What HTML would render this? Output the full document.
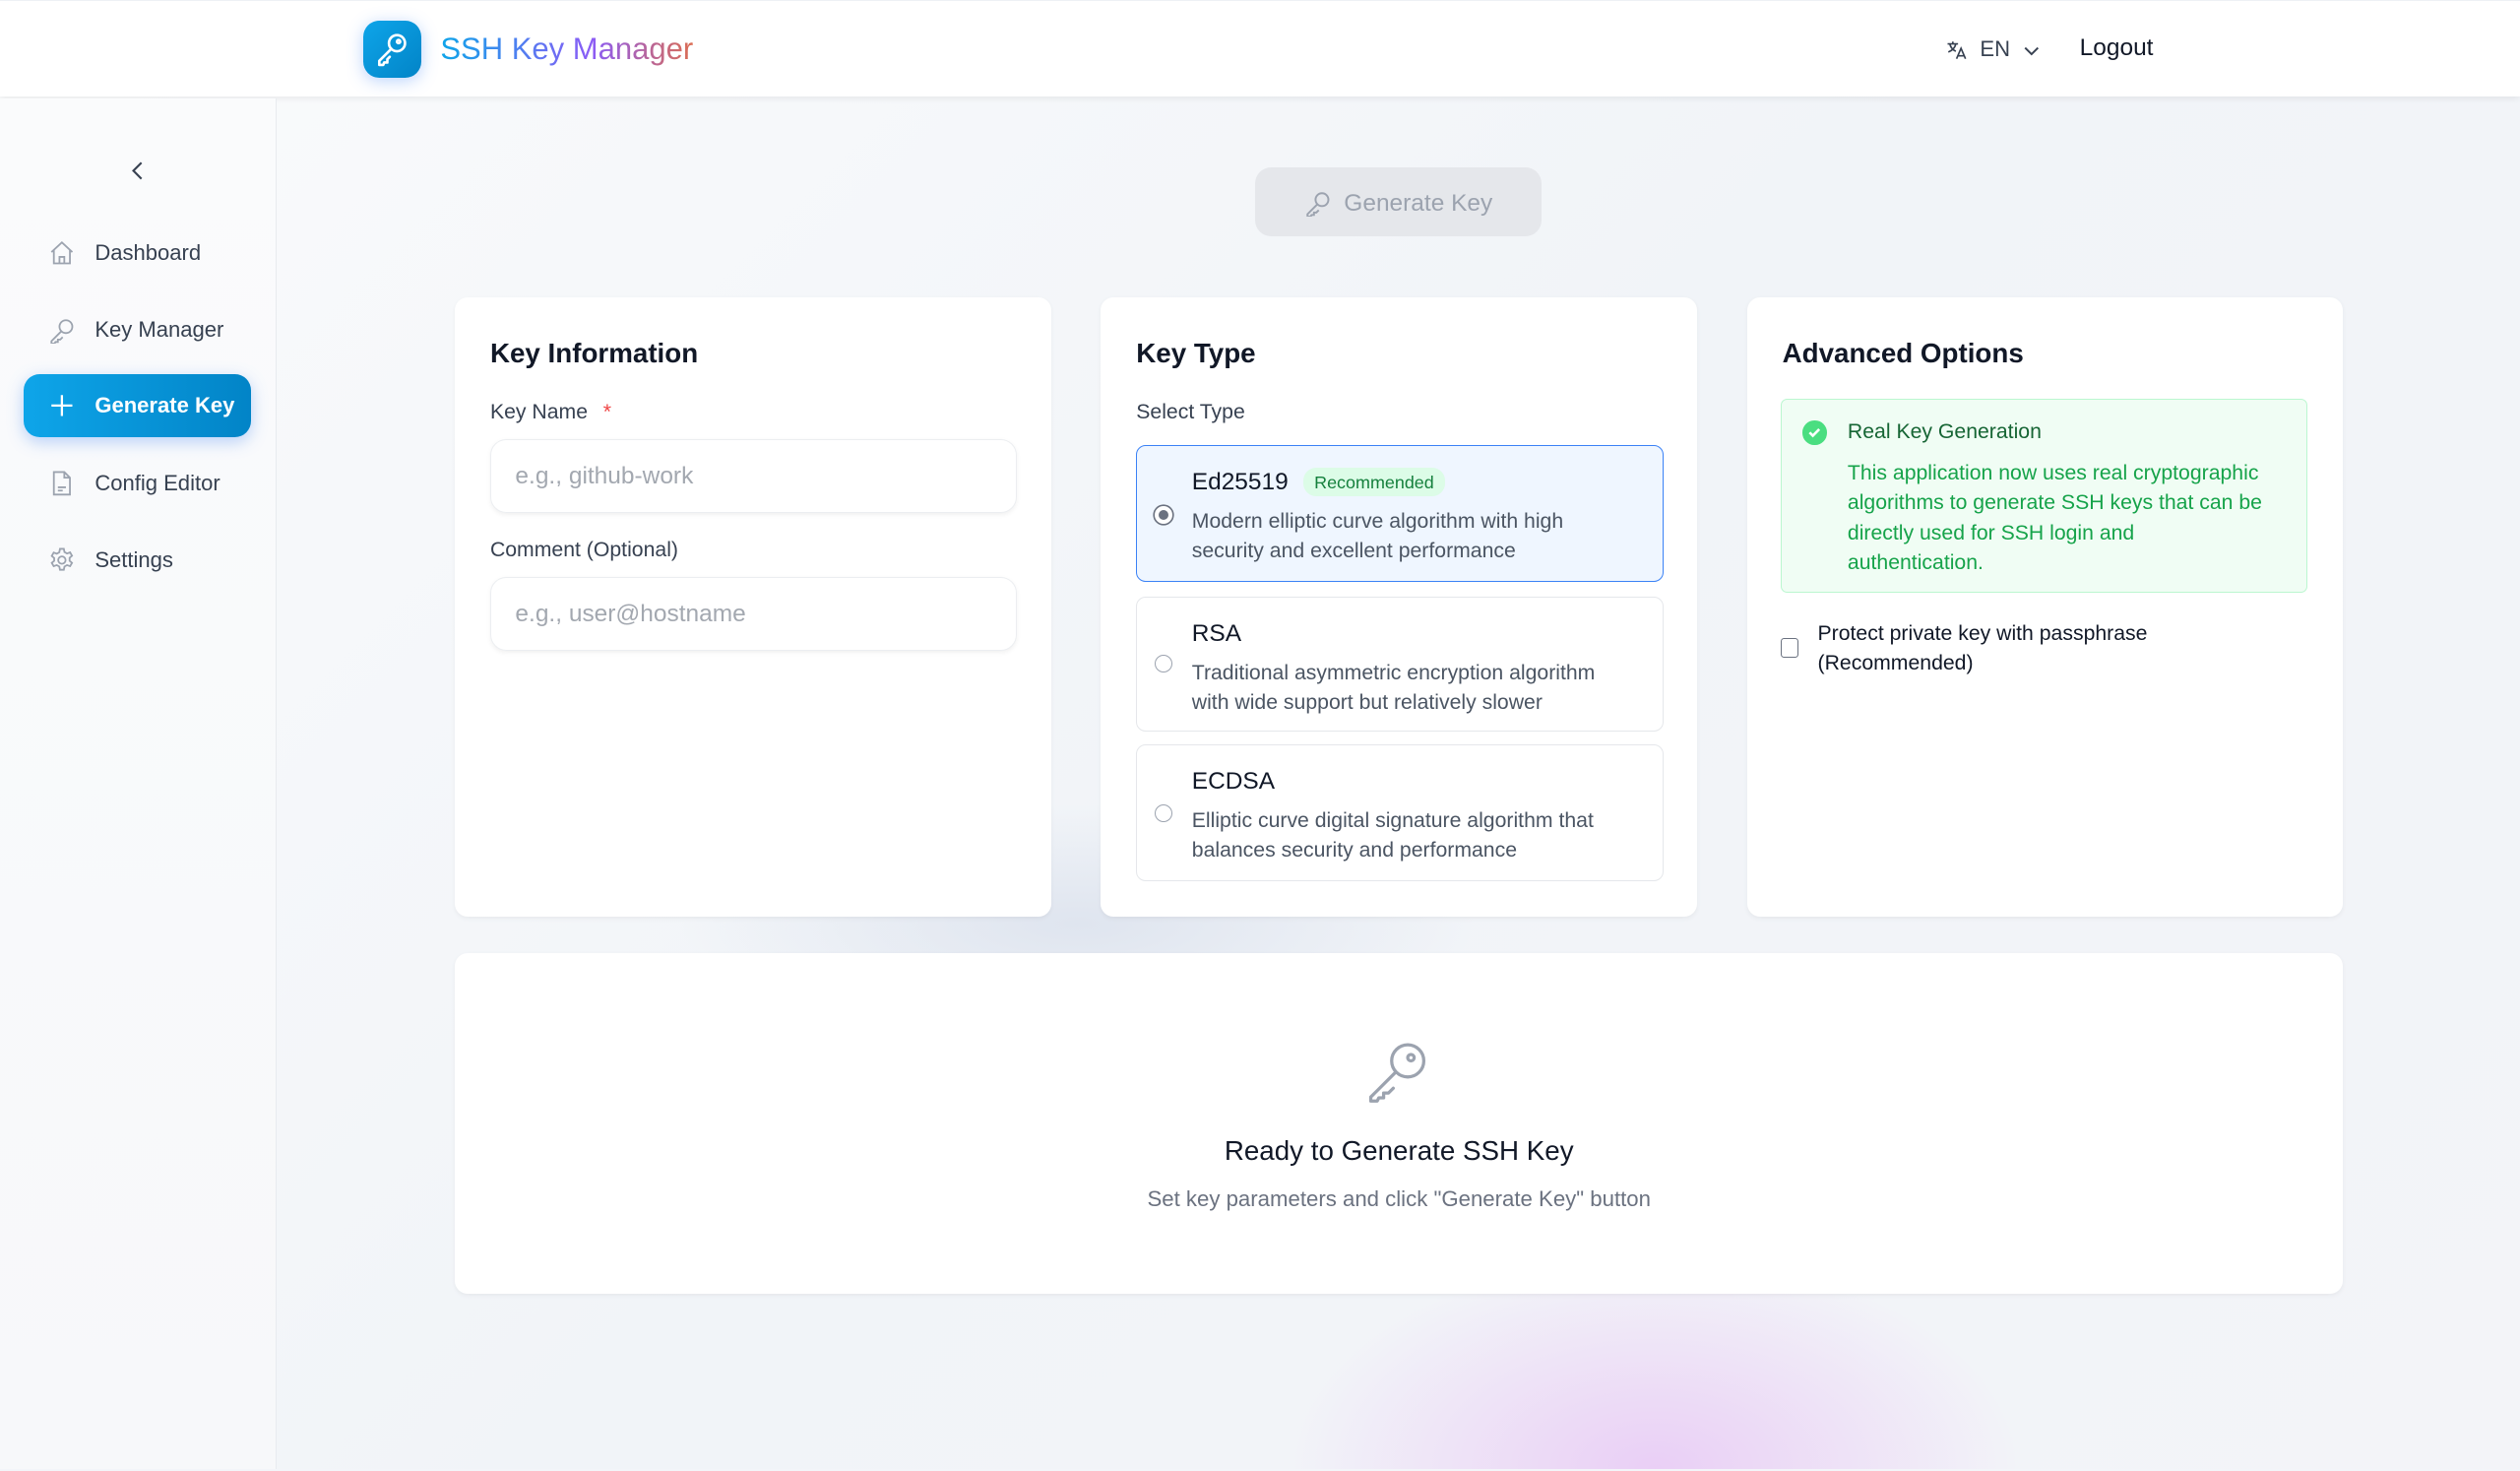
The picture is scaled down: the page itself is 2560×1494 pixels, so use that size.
<!DOCTYPE html>
<html><head><meta charset="utf-8"><style>
*{box-sizing:border-box;margin:0;padding:0}
html,body{width:2560px;height:1494px;overflow:hidden}
body{font-family:"Liberation Sans",sans-serif;background:#f3f5f9;}
#r{zoom:1.63265;width:1568px;height:914px;position:relative;overflow:hidden;background:linear-gradient(135deg,#fafbfc 0%,#f1f4f8 50%,#f3f4f8 100%)}
.glow{position:absolute;left:800px;top:780px;width:460px;height:134px;border-radius:230px 230px 0 0;background:radial-gradient(ellipse at 50% 100%,rgba(232,200,245,.85),rgba(240,220,248,0) 70%)}
.glow2{position:absolute;left:420px;top:500px;width:500px;height:150px;border-radius:50%;background:radial-gradient(ellipse,rgba(215,222,235,.7),rgba(230,235,242,0) 70%)}
.hdr{position:absolute;left:0;top:0;width:1568px;height:60px;background:#fff;box-shadow:0 1px 4px rgba(0,0,0,.08);border-top:1px solid #eef1f5}
.logo{position:absolute;left:226px;top:12px;width:36px;height:36px;border-radius:10px;background:linear-gradient(135deg,#0ea5e9,#0284c7);box-shadow:0 2px 10px rgba(59,130,246,.35)}
.title{position:absolute;left:274px;top:19px;font-size:19px;font-weight:500;background:linear-gradient(90deg,#0ea5e9 0%,#8b5cf6 60%,#f97316 115%);-webkit-background-clip:text;color:transparent}
.side{position:absolute;left:0;top:61px;width:172px;height:854px;background:linear-gradient(180deg,#fafbfc,#f7f8fa);border-right:1px solid #e8ebef}
.it{position:absolute;left:15px;width:141px;height:39px;font-size:13.5px;color:#374151;display:flex;align-items:center;padding-left:44px}
.it svg{position:absolute;left:15px;top:11px}
.act{background:linear-gradient(90deg,#0ea5e9,#0284c7);color:#fff;border-radius:10px;font-weight:600;box-shadow:0 3px 10px rgba(59,130,246,.35)}
.card{position:absolute;background:#fff;border-radius:8px;box-shadow:0 1px 3px rgba(0,0,0,.05)}
.ct{position:absolute;left:22px;top:25px;font-size:17px;font-weight:600;color:#111827}
.lb{position:absolute;font-size:13px;color:#374151}
.in{position:absolute;left:22px;width:328px;height:46px;border:1px solid #eceef1;border-radius:10px;box-shadow:0 1px 3px rgba(0,0,0,.06);font-size:15px;color:#a3a8b0;padding:14px 15px}
.op{position:absolute;left:22px;width:328px;border:1px solid #e5e7eb;border-radius:6px;background:#fff}
.op .rd{position:absolute;left:11px;width:11px;height:11px;border:1px solid #9ca3af;border-radius:50%;background:#fff}
.op .t{position:absolute;left:34px;top:14px;font-size:15px;color:#111827;font-weight:500}
.op .d{position:absolute;left:34px;top:38px;font-size:13px;line-height:18.5px;color:#4b5563;width:262px}
</style></head><body><div id="r">
<div class="glow2"></div><div class="glow"></div>
<div class="hdr">
<div class="logo"><svg width="36" height="36" viewBox="0 0 36 36" fill="none" stroke="#fff" stroke-width="1.6" stroke-linecap="round" stroke-linejoin="round"><circle cx="21" cy="14" r="5"/><path d="M17.5 17.5 L10 25 L10 27.5 L12.5 27.5 L13 26 L15 26 L15 24 L16.5 22.5"/><circle cx="22" cy="13" r="1"/></svg></div>
<div class="title">SSH Key Manager</div>
<svg style="position:absolute;left:1211px;top:24px" width="13" height="13" viewBox="0 0 14 14" fill="none" stroke="#374151" stroke-width="1.1"><path d="M1 3h7M4.5 1.5v1.5M2.5 3c.5 2.5 2 4 4 5M6.5 3c-.5 2.5-2.5 4.5-5 5.5M7 13l3-7 3 7M8 11h4"/></svg>
<div style="position:absolute;left:1232px;top:22px;font-size:13.5px;color:#374151">EN</div>
<svg style="position:absolute;left:1258px;top:25px" width="12" height="12" viewBox="0 0 12 12" fill="none" stroke="#374151" stroke-width="1.2"><path d="M2 4l4 4 4-4"/></svg>
<div style="position:absolute;left:1294px;top:21px;font-size:15px;color:#111827;font-weight:500">Logout</div>
</div>
<div class="side">
<svg style="position:absolute;left:79px;top:38px" width="14" height="14" viewBox="0 0 14 14" fill="none" stroke="#374151" stroke-width="1.3"><path d="M9 2L4 7l5 5"/></svg>
<div class="it" style="top:77px"><svg width="17" height="17" viewBox="0 0 17 17" fill="none" stroke="#9ca3af" stroke-width="1.1"><path d="M2 8L8.5 2 15 8M3.5 6.5V15h10V6.5M7 15v-4h3v4"/></svg>Dashboard</div>
<div class="it" style="top:125px"><svg width="17" height="17" viewBox="0 0 17 17" fill="none" stroke="#9ca3af" stroke-width="1.1"><circle cx="11" cy="6" r="4"/><path d="M8 9l-6 6v1.5h2l.5-1h1.5v-1.5h1.5l1.5-1.5"/></svg>Key Manager</div>
<div class="it act" style="top:172px"><svg width="17" height="17" viewBox="0 0 17 17" fill="none" stroke="#fff" stroke-width="1.4"><path d="M8.5 2v13M2 8.5h13"/></svg>Generate Key</div>
<div class="it" style="top:220px"><svg width="17" height="17" viewBox="0 0 17 17" fill="none" stroke="#9ca3af" stroke-width="1.1"><path d="M3.5 1.5h6.5l3.5 3.5v10.5h-10zM10 1.5v3.5h3.5M6 11h5M6 13h3"/></svg>Config Editor</div>
<div class="it" style="top:268px"><svg width="17" height="17" viewBox="0 0 17 17" fill="none" stroke="#9ca3af" stroke-width="1.1"><circle cx="8.5" cy="8.5" r="2.3"/><path d="M7.3 1.5h2.4l.4 2 1.6.9 1.9-.7 1.2 2.1-1.5 1.3v1.8l1.5 1.3-1.2 2.1-1.9-.7-1.6.9-.4 2H7.3l-.4-2-1.6-.9-1.9.7-1.2-2.1 1.5-1.3V7.2L2.2 5.9l1.2-2.1 1.9.7 1.6-.9z"/></svg>Settings</div>
</div>
<div style="position:absolute;left:781px;top:104px;width:178px;height:43px;border-radius:10px;background:#e5e7eb;color:#9ca3af;font-size:15px;display:flex;align-items:center;justify-content:center;gap:8px;padding-top:2px"><svg width="17" height="17" viewBox="0 0 17 17" fill="none" stroke="#9ca3af" stroke-width="1.2"><circle cx="11" cy="6" r="4"/><path d="M8 9l-6 6v1.5h2l.5-1h1.5v-1.5h1.5l1.5-1.5"/></svg>Generate Key</div>

<div class="card" style="left:283px;top:185px;width:371px;height:385px">
<div class="ct">Key Information</div>
<div class="lb" style="left:22px;top:64px">Key Name <span style="color:#ef4444;margin-left:6px">*</span></div>
<div class="in" style="top:88px">e.g., github-work</div>
<div class="lb" style="left:22px;top:150px">Comment (Optional)</div>
<div class="in" style="top:174px">e.g., user@hostname</div>
</div>

<div class="card" style="left:685px;top:185px;width:371px;height:385px">
<div class="ct">Key Type</div>
<div class="lb" style="left:22px;top:64px">Select Type</div>
<div class="op" style="top:92px;height:85px;background:#eff6ff;border-color:#3b82f6"><div class="rd" style="top:37px;border:3px solid #fff;box-shadow:0 0 0 1px #6b7280;background:#6b7280"></div><div class="t">Ed25519 <span style="font-size:11px;color:#15803d;background:#dcfce7;border-radius:8px;padding:3px 7px;margin-left:5px;font-weight:400;position:relative;top:-1px">Recommended</span></div><div class="d">Modern elliptic curve algorithm with high security and excellent performance</div></div>
<div class="op" style="top:186px;height:84px"><div class="rd" style="top:36px"></div><div class="t">RSA</div><div class="d">Traditional asymmetric encryption algorithm with wide support but relatively slower</div></div>
<div class="op" style="top:278px;height:85px"><div class="rd" style="top:37px"></div><div class="t">ECDSA</div><div class="d">Elliptic curve digital signature algorithm that balances security and performance</div></div>
</div>

<div class="card" style="left:1087px;top:185px;width:371px;height:385px">
<div class="ct">Advanced Options</div>
<div style="position:absolute;left:21px;top:63px;width:328px;height:121px;background:#f0fdf4;border:1px solid #bbf7d0;border-radius:4px">
<div style="position:absolute;left:13px;top:13px;width:15px;height:15px;border-radius:50%;background:#4ade80"><svg width="15" height="15" viewBox="0 0 15 15" fill="none" stroke="#fff" stroke-width="1.6"><path d="M4.5 7.5l2 2 4-4"/></svg></div>
<div style="position:absolute;left:41px;top:13px;font-size:13px;color:#166534;font-weight:500">Real Key Generation</div>
<div style="position:absolute;left:41px;top:37px;width:262px;font-size:13px;line-height:18.5px;color:#16a34a">This application now uses real cryptographic algorithms to generate SSH keys that can be directly used for SSH login and authentication.</div>
</div>
<div style="position:absolute;left:21px;top:212px;width:11px;height:12px;border:1px solid #6b7280;border-radius:2px"></div>
<div style="position:absolute;left:44px;top:200px;font-size:13px;line-height:18.5px;color:#111827;width:260px">Protect private key with passphrase (Recommended)</div>
</div>

<div class="card" style="left:283px;top:593px;width:1175px;height:212px">
<svg style="position:absolute;left:566px;top:52px" width="42" height="42" viewBox="0 0 42 42" fill="none" stroke="#9ca3af" stroke-width="2" stroke-linecap="round" stroke-linejoin="round"><circle cx="27" cy="15" r="10"/><circle cx="29" cy="13" r="2"/><path d="M19.5 22L4 37.5V40h4l1-2h3v-3h3l3-3"/></svg>
<div style="position:absolute;left:0;width:100%;top:113px;text-align:center;font-size:17px;color:#111827;font-weight:500">Ready to Generate SSH Key</div>
<div style="position:absolute;left:0;width:100%;top:145px;text-align:center;font-size:13.6px;color:#6b7280">Set key parameters and click "Generate Key" button</div>
</div>
</div></body></html>
